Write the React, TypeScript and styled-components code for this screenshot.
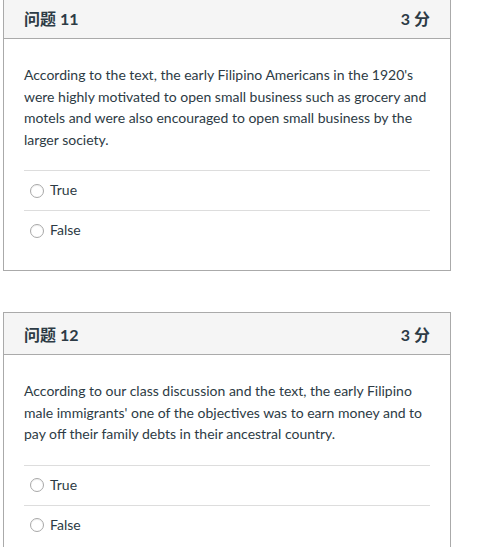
import React from "react";
import styled, { createGlobalStyle } from "styled-components";

const Global = createGlobalStyle`
  html, body { margin: 0; padding: 0; background: #fff; }
  body { font-family: Lato, "Noto Sans CJK SC", sans-serif; color: #2d3b45; }
`;

const Page = styled.div`
  width: 448px;
  margin: -4px 0 0 3px;
  display: flex;
  flex-direction: column;
  gap: 41px;
`;

const Card = styled.section`
  border: 1px solid #aaa;
  background: #fff;
`;

const Header = styled.header`
  height: 41px;
  background: #f5f5f5;
  border-bottom: 1px solid #aaa;
  display: flex;
  align-items: center;
  justify-content: space-between;
  padding: 0 20px;
  font-weight: 700;
  font-size: 16px;
  color: #2d3b45;
`;

const Title = styled.span`
  padding-top: 1px;
`;

const Points = styled.span`
  padding-top: 1px;
`;

const Body = styled.div`
  padding: 25px 20px 20px 20px;
`;

const Question = styled.p`
  margin: 0 0 20px 0;
  font-size: 14px;
  line-height: 21.5px;
  color: #2d3b45;
`;

const Answers = styled.div`
  display: flex;
  flex-direction: column;
`;

const Answer = styled.label`
  box-sizing: border-box;
  height: 40px;
  border-top: 1px solid #ddd;
  display: flex;
  align-items: center;
  gap: 6px;
  padding: 0 0 2px 6px;
  font-size: 14px;
  color: #2d3b45;
`;

const Radio = styled.span`
  width: 12px;
  height: 12px;
  border-radius: 50%;
  border: 1px solid #a8a8a8;
  background: #fff;
  box-shadow: inset 0 1px 1px rgba(0, 0, 0, 0.06);
  margin-top: 2px;
`;

type Q = { num: number; points: number; text: string };

const questions: Q[] = [
  {
    num: 11,
    points: 3,
    text:
      "According to the text, the early Filipino Americans in the 1920's were highly motivated to open small business such as grocery and motels and were also encouraged to open small business by the larger society.",
  },
  {
    num: 12,
    points: 3,
    text:
      "According to our class discussion and the text, the early Filipino male immigrants' one of the objectives was to earn money and to pay off their family debts in their ancestral country.",
  },
];

export default function App() {
  return (
    <>
      <Global />
      <Page>
        {questions.map((q) => (
          <Card key={q.num}>
            <Header>
              <Title>问题 {q.num}</Title>
              <Points>{q.points} 分</Points>
            </Header>
            <Body>
              <Question>{q.text}</Question>
              <Answers>
                {["True", "False"].map((a) => (
                  <Answer key={a}>
                    <Radio />
                    {a}
                  </Answer>
                ))}
              </Answers>
            </Body>
          </Card>
        ))}
      </Page>
    </>
  );
}
